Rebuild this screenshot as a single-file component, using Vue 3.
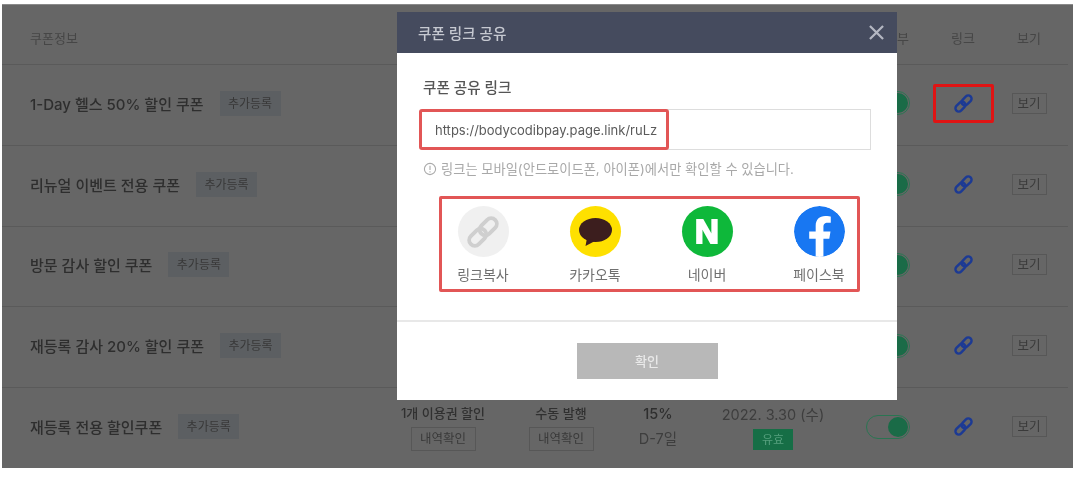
<template>
  <div class="shot">
    <div class="table">
      <div class="row head">
        <div class="cell info">쿠폰정보</div>
        <div class="cell"></div>
        <div class="cell"></div>
        <div class="cell"></div>
        <div class="cell"></div>
        <div class="cell status">노출여부</div>
        <div class="cell">링크</div>
        <div class="cell">보기</div>
      </div>
      <div class="rows">
        <div class="row" v-for="(coupon, i) in coupons" :key="coupon">
          <div class="cell info">
            <span class="title">{{ coupon }}</span>
            <span class="add">추가등록</span>
          </div>
          <template v-if="i === coupons.length - 1">
            <div class="cell stack">
              <span>1개 이용권 할인</span>
              <span class="small-btn">내역확인</span>
            </div>
            <div class="cell stack">
              <span>수동 발행</span>
              <span class="small-btn">내역확인</span>
            </div>
            <div class="cell stack rate">
              <span class="strong">15%</span>
              <span>D-7일</span>
            </div>
            <div class="cell stack rate">
              <span>2022. 3.30 (수)</span>
              <span class="valid">유효</span>
            </div>
          </template>
          <template v-else>
            <div class="cell"></div>
            <div class="cell"></div>
            <div class="cell"></div>
            <div class="cell"></div>
          </template>
          <div class="cell">
            <span class="toggle"><i></i></span>
          </div>
          <div class="cell">
            <span class="link-box" :class="{ marked: i === 0 }">
              <svg class="chain" viewBox="0 0 24 24" fill="none" stroke="#1c3a94" stroke-width="2.8">
                <rect x="11.75" y="2" width="7.5" height="13" rx="3.75" transform="rotate(45 15.5 8.5)" />
                <rect x="4.75" y="9" width="7.5" height="13" rx="3.75" transform="rotate(45 8.5 15.5)" />
              </svg>
            </span>
          </div>
          <div class="cell">
            <span class="view">보기</span>
          </div>
        </div>
      </div>
    </div>

    <div class="modal">
      <div class="modal-head">
        <span>쿠폰 링크 공유</span>
        <svg class="close" viewBox="0 0 16 16" stroke="#b4b7c2" stroke-width="2.4">
          <path d="M1 1L15 15M15 1L1 15" />
        </svg>
      </div>
      <div class="modal-body">
        <div class="label">쿠폰 공유 링크</div>
        <div class="url-input">
          <span class="url-mark"></span>
          https://bodycodibpay.page.link/ruLz
        </div>
        <div class="note">
          <svg viewBox="0 0 14 14" fill="none" stroke="#aaa" stroke-width="1.1">
            <circle cx="7" cy="7" r="5.6" />
            <path d="M7 3.8V8M7 9.2V10.4" />
          </svg>
          링크는 모바일(안드로이드폰, 아이폰)에서만 확인할 수 있습니다.
        </div>
        <div class="share">
          <div class="share-item">
            <span class="circle copy">
              <svg viewBox="0 0 24 24" fill="none" stroke="#cfcfcf" stroke-width="2.6">
                <rect x="11.75" y="2" width="7.5" height="13" rx="3.75" transform="rotate(45 15.5 8.5)" />
                <rect x="4.75" y="9" width="7.5" height="13" rx="3.75" transform="rotate(45 8.5 15.5)" />
              </svg>
            </span>
            링크복사
          </div>
          <div class="share-item">
            <span class="circle kakao">
              <svg viewBox="0 0 51 51">
                <ellipse cx="25.5" cy="24" rx="16.5" ry="12" fill="#3c1e1e" />
                <path d="M17 32L15.5 40L25 35Z" fill="#3c1e1e" />
              </svg>
            </span>
            카카오톡
          </div>
          <div class="share-item">
            <span class="circle naver">N</span>
            네이버
          </div>
          <div class="share-item">
            <span class="circle">
              <svg viewBox="0 0 52 52">
                <circle cx="26" cy="26" r="26" fill="#1877f2" />
                <path d="M36 33.5L37.2 26H30V21.1C30 19 31 17 34.3 17H37.5V10.6C37.5 10.6 34.6 10.1 31.8 10.1C26 10.1 22.1 13.7 22.1 20.1V26H15.5V33.5H22.1V51.7C23.4 51.9 24.7 52 26 52C27.4 52 28.7 51.9 30 51.7V33.5Z" fill="#fff" />
              </svg>
            </span>
            페이스북
          </div>
        </div>
      </div>
      <div class="modal-foot">
        <span class="confirm">확인</span>
      </div>
    </div>
  </div>
</template>

<script setup>
const coupons = [
  "1-Day 헬스 50% 할인 쿠폰",
  "리뉴얼 이벤트 전용 쿠폰",
  "방문 감사 할인 쿠폰",
  "재등록 감사 20% 할인 쿠폰",
  "재등록 전용 할인쿠폰",
];
</script>

<style>
html,
body {
  background: #fff;
}
</style>

<style scoped>
.shot {
  position: relative;
  width: 1071px;
  height: 464px;
  margin: 4px 0 0 2px;
  background: #666;
  border-top: 1px solid #8a8a8a;
  box-sizing: border-box;
  overflow: hidden;
  font-family: Inter, "Noto Sans CJK KR", sans-serif;
  color: #303030;
  filter: blur(0.5px);
}

.table {
  display: flex;
  flex-direction: column;
  height: 100%;
}

.rows {
  flex: 1;
  display: flex;
  flex-direction: column;
}

.rows .row {
  flex: 1;
  padding-bottom: 3px;
  box-sizing: border-box;
}

.row {
  display: grid;
  grid-template-columns: 393px 96px 140px 54px 176px 54px 96px 36px;
  align-items: center;
  width: 1066px;
  border-bottom: 1px solid #5a5a5a;
}

.rows .row:last-child {
  border-bottom: none;
}

.head {
  height: 60px;
  font-size: 13px;
  color: #464646;
  padding-top: 6px;
  box-sizing: border-box;
}

.cell {
  display: flex;
  justify-content: center;
  align-items: center;
  font-size: 13px;
  white-space: nowrap;
}

.status {
  padding-right: 6px;
}

.info {
  justify-content: flex-start;
  padding-left: 28px;
  gap: 16px;
}

.title {
  font-size: 15px;
  font-weight: 500;
  color: #2e2e2e;
}

.add {
  width: 61px;
  height: 25px;
  line-height: 25px;
  text-align: center;
  font-size: 12px;
  background: #5c5f62;
  color: #383838;
}

.stack {
  flex-direction: column;
  gap: 5px;
  font-size: 13px;
  font-weight: 500;
}

.rate {
  font-weight: 400;
  font-size: 14.5px;
  color: #3e3e3e;
}

.strong {
  font-weight: 500;
  color: #2e2e2e;
}

.small-btn {
  width: 65px;
  height: 24px;
  line-height: 22px;
  box-sizing: border-box;
  text-align: center;
  font-size: 12.5px;
  font-weight: 400;
  border: 1px solid #575757;
  color: #3a3a3a;
}

.valid {
  width: 40px;
  height: 21px;
  line-height: 21px;
  text-align: center;
  font-size: 12px;
  background: #166e46;
  color: #56a07e;
}

.toggle {
  display: flex;
  justify-content: flex-end;
  align-items: center;
  width: 44px;
  height: 24px;
  padding: 0 1px;
  box-sizing: border-box;
  border: 1px solid #2a7552;
  border-radius: 12px;
}

.toggle i {
  width: 20px;
  height: 20px;
  border-radius: 50%;
  background: #1a6b47;
}

.link-box {
  display: flex;
  justify-content: center;
  align-items: center;
  flex: none;
  width: 61px;
  height: 39px;
  box-sizing: border-box;
  border: 3px solid transparent;
  border-radius: 2px;
}

.link-box.marked {
  border-color: #e01414;
}

.chain {
  width: 21px;
  height: 21px;
}

.view {
  width: 35px;
  height: 21px;
  line-height: 19px;
  box-sizing: border-box;
  text-align: center;
  font-size: 12.5px;
  border: 1px solid #575757;
  color: #3a3a3a;
}

.modal {
  position: absolute;
  left: 395px;
  top: 7px;
  width: 500px;
  height: 388px;
  display: flex;
  flex-direction: column;
  background: #fff;
}

.modal-head {
  display: flex;
  justify-content: space-between;
  align-items: center;
  height: 41px;
  flex: none;
  padding: 0 13px 0 21px;
  background: #454b5e;
  color: #c6c9d1;
  font-size: 14.6px;
  font-weight: 500;
}

.close {
  width: 15px;
  height: 15px;
}

.modal-body {
  flex: 1;
  padding: 25px 26px 0;
  border-bottom: 2px solid #e8e8e8;
}

.label {
  font-size: 14.6px;
  font-weight: 500;
  line-height: 20px;
  color: #555;
}

.url-input {
  position: relative;
  display: flex;
  align-items: center;
  height: 41px;
  margin-top: 11px;
  padding: 1px 0 0 12px;
  box-sizing: border-box;
  border: 1px solid #ddd;
  border-left: none;
  font-size: 13px;
  color: #5a5a5a;
}

.url-mark {
  position: absolute;
  left: -4px;
  top: -1px;
  width: 250px;
  height: 41px;
  box-sizing: border-box;
  border: 3px solid #e25656;
  border-radius: 3px;
}

.note {
  display: flex;
  align-items: center;
  gap: 4px;
  margin-top: 9px;
  font-size: 13.25px;
  line-height: 20px;
  color: #a8a8a8;
  white-space: nowrap;
}

.note svg {
  width: 14px;
  height: 14px;
}

.share {
  display: flex;
  gap: 52px;
  width: 421px;
  height: 96px;
  margin: 17px 0 0 16px;
  padding: 7px 0 0 11px;
  box-sizing: border-box;
  border: 3px solid #e25656;
  border-radius: 2px;
}

.share-item {
  display: flex;
  flex-direction: column;
  align-items: center;
  gap: 9px;
  width: 60px;
  flex: none;
  font-size: 14px;
  line-height: 18px;
  color: #707070;
  white-space: nowrap;
}

.circle {
  display: flex;
  justify-content: center;
  align-items: center;
  width: 51px;
  height: 51px;
  border-radius: 50%;
  overflow: hidden;
}

.circle svg {
  width: 100%;
  height: 100%;
}

.copy {
  background: #f0f0f0;
}

.copy svg {
  flex: none;
  width: 36px;
  height: 36px;
}

.kakao {
  background: #fee000;
}

.naver {
  background: #0eb83a;
  color: #fff;
  font-family: "Liberation Sans", sans-serif;
  font-size: 33px;
  font-weight: 700;
  -webkit-text-stroke: 2px #fff;
}

.modal-foot {
  display: flex;
  justify-content: center;
  flex: none;
  height: 78px;
  padding-top: 21px;
  box-sizing: border-box;
}

.confirm {
  width: 141px;
  height: 36px;
  line-height: 36px;
  text-align: center;
  font-size: 13px;
  font-weight: 500;
  background: #b8b8b8;
  color: #e9e9e9;
}
</style>
